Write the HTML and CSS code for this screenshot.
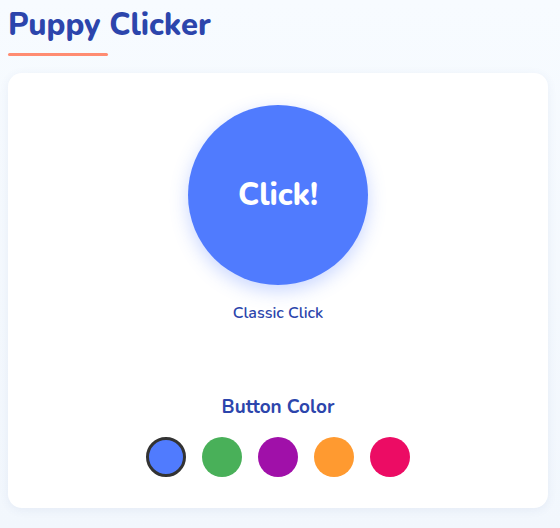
FILE: index.html
```html
<!DOCTYPE html>
<html>
<head>
<meta charset="utf-8">
<link rel="stylesheet" href="styles.css">
</head>
<body>
<header class="header">
  <h1 class="title">Puppy Clicker</h1>
  <div class="underline"></div>
</header>
<main class="card">
  <button class="click-btn">Click!</button>
  <div class="mode">Classic Click</div>
  <h2 class="section-title">Button Color</h2>
  <div class="swatches">
    <span class="swatch blue selected"></span>
    <span class="swatch green"></span>
    <span class="swatch purple"></span>
    <span class="swatch orange"></span>
    <span class="swatch pink"></span>
  </div>
</main>
</body>
</html>
```
FILE: styles.css
```css
html, body {
  margin: 0;
  padding: 0;
}
body {
  width: 560px;
  height: 528px;
  background: linear-gradient(180deg, #f7fbff 0%, #f2f7fd 100%);
  font-family: "Nunito", "Lato", "Open Sans", sans-serif;
  padding: 0 12px 0 8px;
  box-sizing: border-box;
  overflow: hidden;
}
.header {
  padding-top: 6px;
}
.title {
  margin: 0;
  font-size: 31px;
  font-weight: 800;
  color: #2c45ac;
  line-height: 38px;
}
.underline {
  width: 100px;
  height: 3px;
  border-radius: 2px;
  background: #ff8c72;
  margin-top: 9px;
}
.card {
  margin-top: 17px;
  background: #ffffff;
  border-radius: 14px;
  box-shadow: 0 2px 10px rgba(60, 90, 150, 0.08);
  height: 435px;
  box-sizing: border-box;
  padding-top: 32px;
  display: flex;
  flex-direction: column;
  align-items: center;
}
.click-btn {
  width: 180px;
  height: 180px;
  border-radius: 50%;
  border: none;
  background: #507bfe;
  color: #ffffff;
  font-family: inherit;
  font-size: 31px;
  font-weight: 800;
  box-shadow: 0 6px 18px rgba(80, 123, 254, 0.3);
  padding: 0;
}
.mode {
  margin-top: 18px;
  font-size: 16px;
  font-weight: 600;
  color: #2c45ac;
  line-height: 20px;
}
.section-title {
  margin: 71px 0 0;
  font-size: 19px;
  font-weight: 700;
  color: #2c45ac;
  line-height: 26px;
}
.swatches {
  display: flex;
  gap: 16px;
  margin-top: 17px;
}
.swatch {
  width: 40px;
  height: 40px;
  border-radius: 50%;
  box-sizing: border-box;
}
.swatch.selected {
  border: 3px solid #333333;
}
.blue { background: #507bfe; }
.green { background: #49b059; }
.purple { background: #a010a9; }
.orange { background: #ff9a30; }
.pink { background: #ec0c64; }
```
